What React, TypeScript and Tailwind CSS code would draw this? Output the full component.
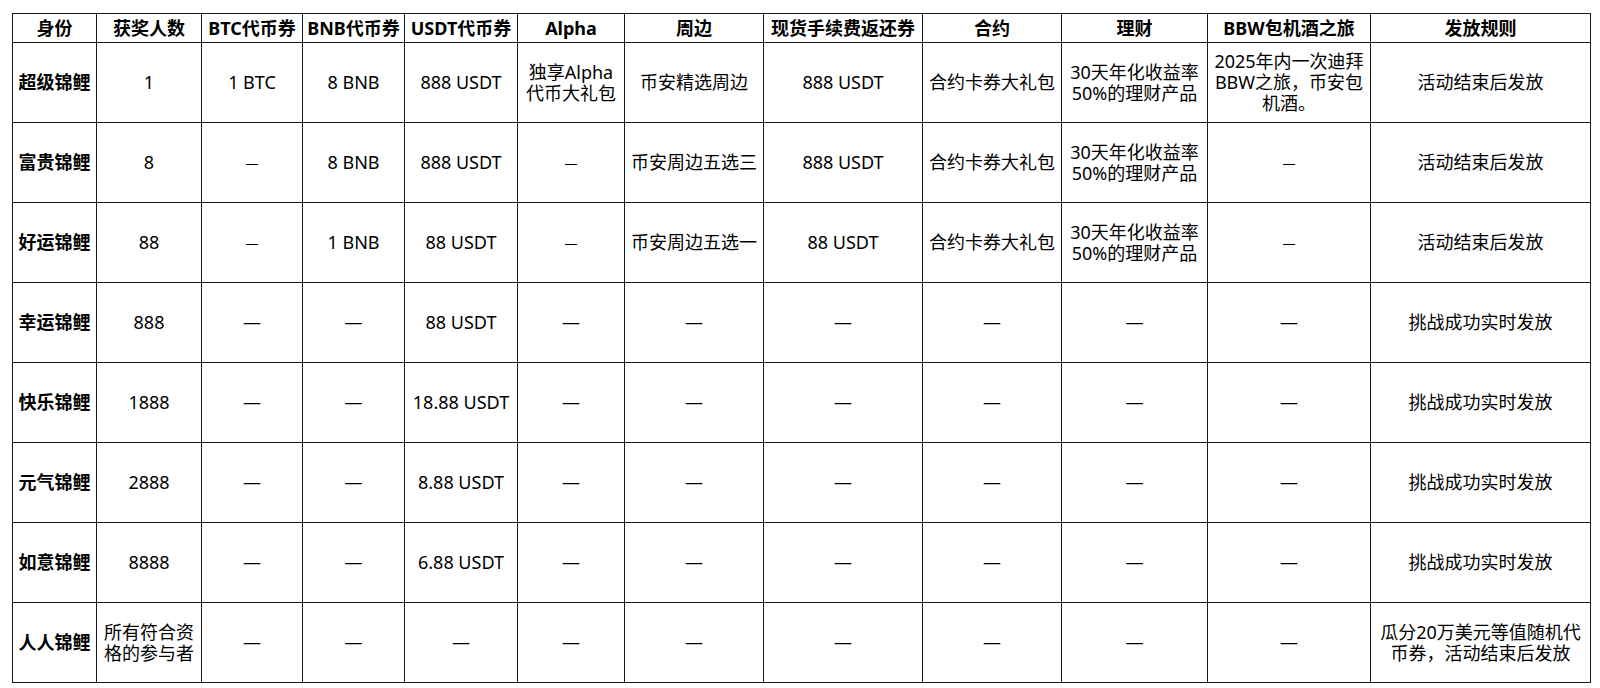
import React from "react";

const widths = [84, 105, 101, 102, 113, 107, 139, 159, 139, 146, 163, 220];

const headers = [
  "身份",
  "获奖人数",
  "BTC代币券",
  "BNB代币券",
  "USDT代币券",
  "Alpha",
  "周边",
  "现货手续费返还券",
  "合约",
  "理财",
  "BBW包机酒之旅",
  "发放规则",
];

const S = <span className="text-[13px]">—</span>;
const L = "—";

const licai = (
  <>
    30天年化收益率
    <br />
    50%的理财产品
  </>
);

const rows: React.ReactNode[][] = [
  [
    "超级锦鲤",
    "1",
    "1 BTC",
    "8 BNB",
    "888 USDT",
    <>
      独享Alpha
      <br />
      代币大礼包
    </>,
    "币安精选周边",
    "888 USDT",
    "合约卡券大礼包",
    licai,
    <>
      2025年内一次迪拜
      <br />
      BBW之旅，币安包
      <br />
      机酒。
    </>,
    "活动结束后发放",
  ],
  ["富贵锦鲤", "8", S, "8 BNB", "888 USDT", S, "币安周边五选三", "888 USDT", "合约卡券大礼包", licai, S, "活动结束后发放"],
  ["好运锦鲤", "88", S, "1 BNB", "88 USDT", S, "币安周边五选一", "88 USDT", "合约卡券大礼包", licai, S, "活动结束后发放"],
  ["幸运锦鲤", "888", L, L, "88 USDT", L, L, L, L, L, L, "挑战成功实时发放"],
  ["快乐锦鲤", "1888", L, L, "18.88 USDT", L, L, L, L, L, L, "挑战成功实时发放"],
  ["元气锦鲤", "2888", L, L, "8.88 USDT", L, L, L, L, L, L, "挑战成功实时发放"],
  ["如意锦鲤", "8888", L, L, "6.88 USDT", L, L, L, L, L, L, "挑战成功实时发放"],
  [
    "人人锦鲤",
    <>
      所有符合资
      <br />
      格的参与者
    </>,
    L,
    L,
    L,
    L,
    L,
    L,
    L,
    L,
    L,
    <>
      瓜分20万美元等值随机代
      <br />
      币券，活动结束后发放
    </>,
  ],
];

export default function App() {
  return (
    <div
      className="w-[1600px] h-[688px] bg-white text-black overflow-hidden"
      style={{ fontFamily: '"Noto Sans", "Noto Sans CJK SC", sans-serif' }}
    >
      <div className="pt-[13px] pl-[12px]">
        <table className="table-fixed border-collapse w-[1578px] text-[18px] leading-[21px]">
          <colgroup>
            {widths.map((w, i) => (
              <col key={i} style={{ width: w }} />
            ))}
          </colgroup>
          <thead>
            <tr className="h-[29px]">
              {headers.map((h, i) => (
                <th
                  key={i}
                  className="border border-[#1a1a1a] px-0 py-0 font-bold text-center align-middle whitespace-nowrap"
                >
                  {h}
                </th>
              ))}
            </tr>
          </thead>
          <tbody>
            {rows.map((r, ri) => (
              <tr key={ri} className="h-[80px]">
                {r.map((c, ci) => (
                  <td
                    key={ci}
                    className={
                      "border border-[#1a1a1a] px-0 py-0 text-center align-middle whitespace-nowrap " +
                      (ci === 0 ? "font-bold" : "font-normal")
                    }
                  >
                    {c}
                  </td>
                ))}
              </tr>
            ))}
          </tbody>
        </table>
      </div>
    </div>
  );
}
